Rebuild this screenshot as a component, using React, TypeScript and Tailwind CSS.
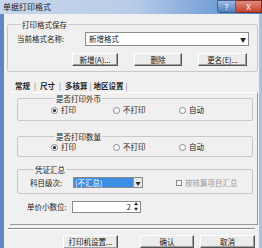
import React from "react";

const font = { fontFamily: '"Noto Sans CJK SC", "Noto Sans", sans-serif' };

const Btn: React.FC<{ w: string; children: React.ReactNode }> = ({ w, children }) => (
    <div className={`${w} h-[13px] flex items-center justify-center bg-[#ececec] border border-t-white border-l-white border-b-[#555] border-r-[#555] shadow-[inset_-1px_-1px_0_#a0a0a0] text-[7.5px] text-[#111]`}>
        {children}
    </div>
);

const Radio: React.FC<{ on?: boolean; label: string; w: string }> = ({ on, label, w }) => (
    <div className={`${w} flex items-center gap-[3px]`}>
        <span className="w-[7px] h-[7px] rounded-full border border-[#888] bg-white flex items-center justify-center">
            {on && <span className="w-[3px] h-[3px] rounded-full bg-[#222]" />}
        </span>
        <span>{label}</span>
    </div>
);

const Group: React.FC<{ title: string; className: string; children: React.ReactNode }> = ({ title, className, children }) => (
    <fieldset className={`border border-[#c9c9c9] rounded-[2px] ${className}`}>
        <legend className="ml-[4px] px-[1px] leading-[9px]">{title}</legend>
        {children}
    </fieldset>
);

export default function App() {
    return (
        <div style={font} className="w-[262px] h-[248px] overflow-hidden bg-[#f0f0f0] text-[7.5px] text-[#222] flex flex-col">
            {/* title bar */}
            <div className="h-[14px] shrink-0 flex items-center bg-gradient-to-r from-[#c6d6ec] via-[#b9cde8] to-[#4f86cc]">
                <span className="pl-[3px] text-[8px] text-[#1a1a1a]">单据打印格式</span>
                <div className="ml-auto flex h-[13px] self-start">
                    <div className="w-[19px] flex items-center justify-center bg-gradient-to-b from-[#9fbde3] to-[#4f7fbf] text-white text-[8px] border border-[#3d5f8f] rounded-bl-[3px]">?</div>
                    <div className="w-[26px] flex items-center justify-center bg-gradient-to-b from-[#e08a7a] to-[#c2402e] text-white text-[8px] border border-[#7a2a20] border-l-0">X</div>
                </div>
            </div>

            <div className="flex-1 flex border-l-[4px] border-l-[#5d86c2] border-r-[3px] border-r-[#aac3e3]">
                <div className="flex-1 flex flex-col">
                    {/* 打印格式保存 */}
                    <Group title="打印格式保存" className="ml-[3px] mr-[1px] mt-[6px] h-[52px] pl-[9px] pr-[8px]">
                        <div className="flex items-center mt-[3px]">
                            <span className="w-[68px]">当前格式名称:</span>
                            <div className="flex-1 h-[14px] bg-white border border-[#8a8a8a] flex items-center pl-[3px]">
                                <span>新增格式</span>
                                <span className="ml-auto mr-[2px] text-[6px]">▼</span>
                            </div>
                        </div>
                        <div className="flex mt-[7px] pl-[55px] gap-[16px]">
                            <Btn w="w-[46px]">新增(A)...</Btn>
                            <Btn w="w-[48px]">删除</Btn>
                            <Btn w="w-[49px]">更名(E)...</Btn>
                        </div>
                    </Group>

                    {/* tabs */}
                    <div className="flex items-center h-[12px] mt-[8px] pl-[11px] text-[7.5px]">
                        <span className="font-bold">常规</span>
                        <span className="mx-[4px] text-[#777]">|</span>
                        <span className="font-bold">尺寸</span>
                        <span className="mx-[4px] text-[#777]">|</span>
                        <span className="font-bold">多核算</span>
                        <span className="mx-[2px] text-[#777]">|</span>
                        <span className="font-bold">地区设置</span>
                        <span className="mx-[2px] text-[#777]">|</span>
                    </div>

                    <div className="ml-[6px] mr-[1px] h-[133px] border-t border-t-white border-r border-r-[#9a9a9a] border-b border-b-[#9a9a9a] flex flex-col pl-[7px] pr-[4px]">
                        <Group title="是否打印外币" className="mt-[1px] h-[27px] pl-[33px]">
                            <div className="flex items-center h-[14px]">
                                <Radio on label="打印" w="w-[62px]" />
                                <Radio label="不打印" w="w-[66px]" />
                                <Radio label="自动" w="w-[40px]" />
                            </div>
                        </Group>
                        <Group title="是否打印数量" className="mt-[11px] h-[25px] pl-[33px]">
                            <div className="flex items-center h-[12px]">
                                <Radio on label="打印" w="w-[62px]" />
                                <Radio label="不打印" w="w-[66px]" />
                                <Radio label="自动" w="w-[40px]" />
                            </div>
                        </Group>
                        <Group title="凭证汇总" className="mt-[8px] h-[29px] pl-[12px]">
                            <div className="flex items-center mt-[3px]">
                                <span className="w-[43px]">科目级次:</span>
                                <div className="w-[70px] h-[11px] bg-white border border-[#8a8a8a] flex items-center">
                                    <span className="bg-[#3a8ee6] text-white px-[1px] flex-1 leading-[9px]">(不汇总)</span>
                                    <span className="w-[9px] h-[9px] flex items-center justify-center bg-[#e8e8e8] border-l border-[#999] text-[5px]">▼</span>
                                </div>
                                <div className="ml-[33px] flex items-center gap-[3px] text-[#9a9a9a]">
                                    <span className="w-[6px] h-[6px] border border-[#8a8a8a] bg-white" />
                                    <span>按核算项目汇总</span>
                                </div>
                            </div>
                        </Group>
                        <div className="flex items-center mt-[7px] pl-[10px]">
                            <span className="w-[45px]">单价小数位:</span>
                            <div className="w-[69px] h-[12px] bg-white border border-[#8a8a8a] flex items-center justify-end">
                                <span className="mr-[2px]">2</span>
                                <span className="w-[6px] flex flex-col items-center text-[4px] leading-[5px] mr-[1px]">
                                    <span>▲</span>
                                    <span>▼</span>
                                </span>
                            </div>
                        </div>
                    </div>

                    <div className="mx-[4px] mt-[3px] border-t border-t-[#8a8a8a] border-b border-b-white" />

                    <div className="flex mt-[5px] pl-[59px]">
                        <Btn w="w-[55px] h-[14px]">打印机设置...</Btn>
                        <div className="w-[22px]" />
                        <Btn w="w-[54px]">确认</Btn>
                        <div className="w-[6px]" />
                        <Btn w="w-[55px]">取消</Btn>
                    </div>
                </div>
            </div>
        </div>
    );
}
